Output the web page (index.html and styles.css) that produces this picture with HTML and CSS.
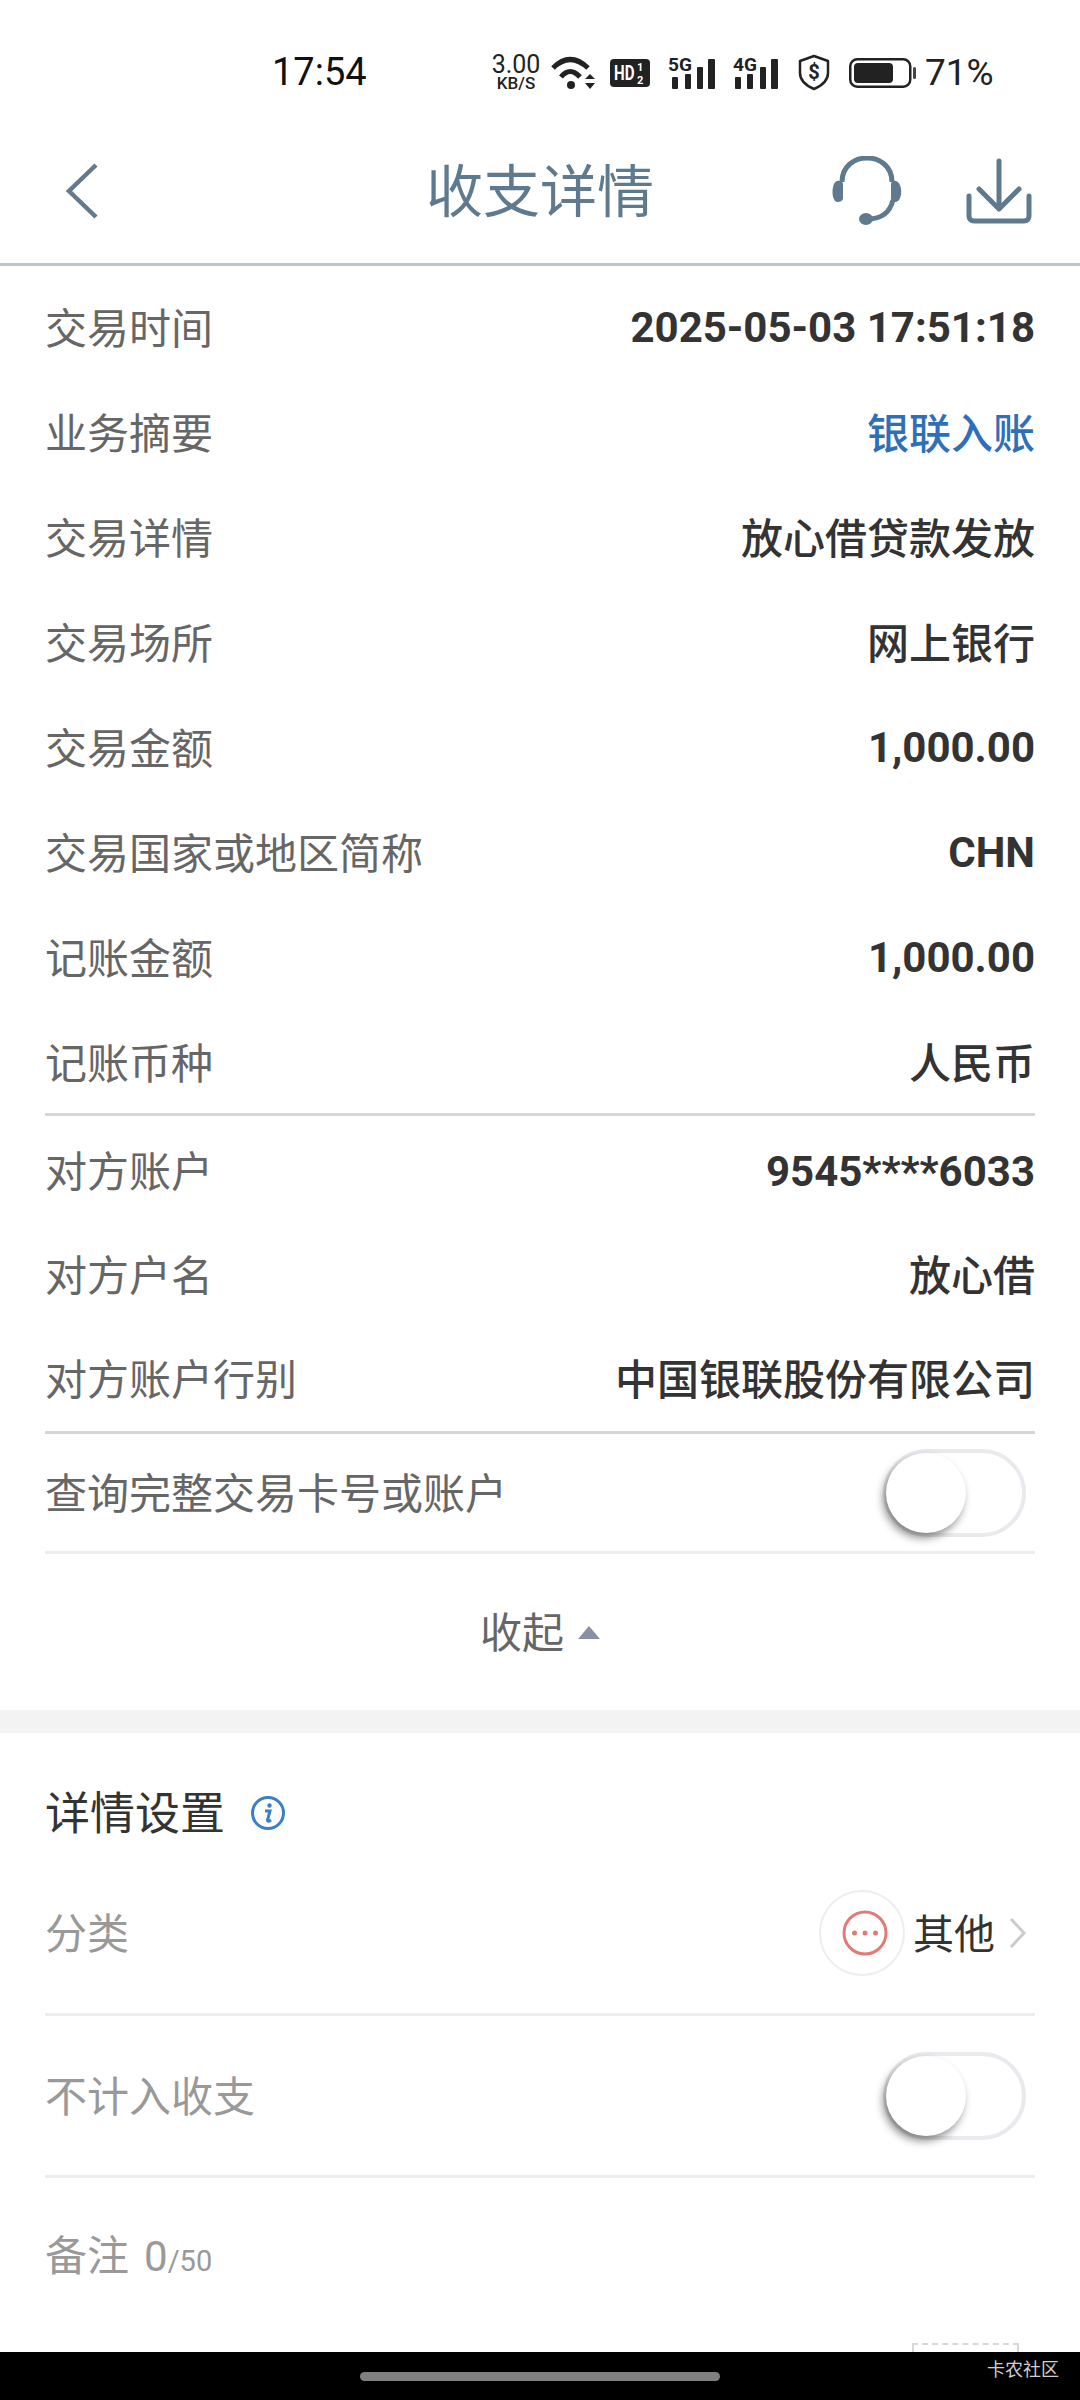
FILE: index.html
```html
<!DOCTYPE html>
<html lang="zh-CN">
<head>
    <meta charset="UTF-8">
    <meta name="viewport" content="width=device-width, initial-scale=1.0">
    <title>收支详情</title>
    <link rel="stylesheet" href="styles.css">
</head>
<body>
    <div class="status-bar">
        <span class="clock">17:54</span>
        <div class="net-speed">
            <span class="speed-num">3.00</span>
            <span class="speed-unit">KB/S</span>
        </div>
        <!-- wifi -->
        <svg class="ic-wifi" width="46" height="34" viewBox="0 0 46 34">
            <path d="M2 12 Q19 -5 37 12" fill="none" stroke="#222" stroke-width="5"/>
            <path d="M10 21 Q19 10 29 21" fill="none" stroke="#222" stroke-width="5"/>
            <circle cx="20" cy="29" r="4" fill="#222"/>
            <path d="M34 23 L39 18 L44 23 Z M34 27 H44 L39 33 Z" fill="#222"/>
        </svg>
        <!-- HD badge -->
        <svg class="ic-hd" width="40" height="28" viewBox="0 0 40 28">
            <rect width="40" height="28" rx="4" fill="#222"/>
            <text transform="translate(4 21) scale(0.72 1)" class="hd-text">HD</text>
            <text x="27" y="12" class="hd-small">1</text>
            <text x="27" y="25" class="hd-small">2</text>
        </svg>
        <!-- 5G signal -->
        <svg class="ic-signal" width="48" height="40" viewBox="0 0 48 40">
            <text x="0" y="18" class="sig-text" textLength="24" lengthAdjust="spacingAndGlyphs">5G</text>
            <rect x="4" y="24" width="6" height="12" rx="1" fill="#222"/>
            <rect x="17" y="21" width="6" height="15" rx="1" fill="#222"/>
            <rect x="29" y="14" width="6" height="22" rx="1" fill="#222"/>
            <rect x="40" y="6" width="7" height="30" rx="1" fill="#222"/>
        </svg>
        <!-- 4G signal -->
        <svg class="ic-signal ic-signal-4g" width="46" height="40" viewBox="0 0 46 40">
            <text x="0" y="18" class="sig-text" textLength="24" lengthAdjust="spacingAndGlyphs">4G</text>
            <rect x="2" y="24" width="6" height="12" rx="1" fill="#222"/>
            <rect x="14" y="21" width="6" height="15" rx="1" fill="#222"/>
            <rect x="27" y="14" width="6" height="22" rx="1" fill="#222"/>
            <rect x="38" y="6" width="7" height="30" rx="1" fill="#222"/>
        </svg>
        <!-- shield -->
        <svg class="ic-shield" width="34" height="37" viewBox="0 0 34 37">
            <path d="M17 2 L31 7 V19 C31 27 24 32 17 35 C10 32 3 27 3 19 V7 Z" fill="none" stroke="#222" stroke-width="2.500" stroke-linejoin="round"/>
            <text x="17" y="25" class="shield-text" text-anchor="middle">$</text>
        </svg>
        <!-- battery -->
        <svg class="ic-battery" width="67" height="30" viewBox="0 0 67 30">
            <rect x="1.250" y="1.250" width="60" height="27.500" rx="7" fill="none" stroke="#222" stroke-width="2.500"/>
            <rect x="5" y="5" width="39" height="20" rx="4" fill="#222"/>
            <rect x="64" y="9" width="3" height="12" rx="1.500" fill="#444"/>
        </svg>
        <span class="battery-pct">71%</span>
    </div>

    <div class="nav-bar">
        <svg class="ic-back" width="34" height="58" viewBox="0 0 34 58">
            <path d="M31 3 L4 29 L31 55" fill="none" stroke="#64798b" stroke-width="4.500"/>
        </svg>
        <h1 class="nav-title">收支详情</h1>
        <div class="nav-actions">
            <!-- headset -->
            <svg width="74" height="70" viewBox="0 0 74 70">
                <path d="M12 26 C12 -6 62 -6 62 26" fill="none" stroke="#5f7a8e" stroke-width="5"/>
                <path d="M7 25 C1 27 1 45 7 46 C10 46 13 45 13 42 V28 C13 26 10 24 7 25 Z" fill="#5f7a8e"/>
                <path d="M66 25 C73 27 73 45 66 46 C63 46 61 45 61 42 V28 C61 26 63 24 66 25 Z" fill="#5f7a8e"/>
                <path d="M63 44 C60 56 52 63 38 63" fill="none" stroke="#5f7a8e" stroke-width="5"/>
                <ellipse cx="36" cy="63" rx="7" ry="6" fill="#5f7a8e"/>
            </svg>
            <!-- download -->
            <svg width="66" height="66" viewBox="0 0 66 66">
                <path d="M33 3 V50" fill="none" stroke="#5f7a8e" stroke-width="5" stroke-linecap="round"/>
                <path d="M13 31 L33 51 L53 31" fill="none" stroke="#5f7a8e" stroke-width="5" stroke-linecap="round" stroke-linejoin="round"/>
                <path d="M3 38 V58 C3 61 5 63 8 63 H58 C61 63 63 61 63 58 V38" fill="none" stroke="#5f7a8e" stroke-width="5" stroke-linecap="round"/>
            </svg>
        </div>
    </div>

    <div class="details">
        <div class="detail-group first">
            <div class="row"><span class="label">交易时间</span><span class="value">2025-05-03 17:51:18</span></div>
            <div class="row"><span class="label">业务摘要</span><span class="value cjk link">银联入账</span></div>
            <div class="row"><span class="label">交易详情</span><span class="value cjk">放心借贷款发放</span></div>
            <div class="row"><span class="label">交易场所</span><span class="value cjk">网上银行</span></div>
            <div class="row"><span class="label">交易金额</span><span class="value">1,000.00</span></div>
            <div class="row"><span class="label">交易国家或地区简称</span><span class="value">CHN</span></div>
            <div class="row"><span class="label">记账金额</span><span class="value">1,000.00</span></div>
            <div class="row"><span class="label">记账币种</span><span class="value cjk">人民币</span></div>
        </div>
        <div class="detail-group second">
            <div class="row"><span class="label">对方账户</span><span class="value">9545****6033</span></div>
            <div class="row"><span class="label">对方户名</span><span class="value cjk">放心借</span></div>
            <div class="row"><span class="label">对方账户行别</span><span class="value cjk">中国银联股份有限公司</span></div>
        </div>
        <div class="row row-toggle">
            <span class="label">查询完整交易卡号或账户</span>
            <div class="toggle"><div class="thumb"></div></div>
        </div>
    </div>

    <div class="collapse">
        <span class="label">收起</span>
        <i class="caret-up"></i>
    </div>

    <div class="gap-band"></div>

    <div class="settings">
        <div class="settings-title">
            <h2>详情设置</h2>
            <svg width="36" height="36" viewBox="0 0 36 36">
                <circle cx="18" cy="18" r="15.500" fill="none" stroke="#3d7fc4" stroke-width="3"/>
                <circle cx="19.500" cy="10.500" r="2.200" fill="#3d7fc4"/>
                <path d="M15 16 H20 L17.500 25 C17.200 26.500 18.500 26.800 21 25" fill="none" stroke="#3d7fc4" stroke-width="3"/>
            </svg>
        </div>
        <div class="set-row set-category">
            <span class="set-label">分类</span>
            <div class="category">
                <div class="cat-icon">
                    <svg width="46" height="46" viewBox="0 0 46 46">
                        <circle cx="23" cy="23" r="21" fill="none" stroke="#e27a78" stroke-width="3"/>
                        <circle cx="12.500" cy="23" r="2.500" fill="#e27a78"/>
                        <circle cx="23" cy="23" r="2.500" fill="#e27a78"/>
                        <circle cx="33.500" cy="23" r="2.500" fill="#e27a78"/>
                    </svg>
                </div>
                <span class="cat-name">其他</span>
                <svg width="18" height="32" viewBox="0 0 18 32">
                    <path d="M2 2 L15 16 L2 30" fill="none" stroke="#cccccc" stroke-width="3"/>
                </svg>
            </div>
        </div>
        <div class="set-row set-exclude">
            <span class="set-label">不计入收支</span>
            <div class="toggle"><div class="thumb"></div></div>
        </div>
        <div class="note">
            <span class="set-label">备注</span>
            <span class="note-count">0</span><span class="note-max">/50</span>
            <div class="dashed-btn"></div>
        </div>
    </div>

    <div class="bottom-bar">
        <div class="home-handle"></div>
        <span class="watermark">卡农社区</span>
    </div>
</body>
</html>
```

FILE: styles.css
```css
body {
    font-family: Roboto, "Noto Sans CJK SC", sans-serif;
    background-color: #ffffff;
    margin: 0;
    padding: 0;
    width: 1080px;
    height: 2400px;
    overflow: hidden;
    display: flex;
    flex-direction: column;
}

/* status bar */
.status-bar {
    height: 55px;
    padding-top: 45px;
    padding-left: 272px;
    display: flex;
    align-items: center;
    color: #111;
}

.clock {
    font-size: 38px;
    width: 94px;
    line-height: 55px;
    white-space: nowrap;
}

.net-speed {
    margin-left: 124px;
    width: 52px;
    display: flex;
    flex-direction: column;
    align-items: center;
    color: #222;
}

.speed-num {
    font-size: 25px;
    line-height: 22px;
}

.speed-unit {
    font-size: 17px;
    font-weight: 500;
    line-height: 15px;
}

.ic-wifi {
    margin-left: 9px;
}

.ic-hd {
    margin-left: 13px;
}

.hd-text {
    font-size: 21px;
    font-weight: 700;
    fill: #fff;
}

.hd-small {
    font-size: 11px;
    font-weight: 700;
    fill: #fff;
}

.ic-signal {
    margin-left: 18px;
}

.ic-signal-4g {
    margin-left: 17px;
}

.sig-text {
    font-size: 19px;
    font-weight: 700;
    fill: #222;
}

.ic-shield {
    margin-left: 18px;
}

.shield-text {
    font-size: 20px;
    font-weight: 700;
    fill: #222;
}

.ic-battery {
    margin-left: 18px;
}

.battery-pct {
    margin-left: 9px;
    font-size: 37px;
    line-height: 55px;
    color: #222;
}

/* top nav */
.nav-bar {
    height: 145px;
    padding-top: 18px;
    border-bottom: 3px solid #b7c7d2;
    display: grid;
    grid-template-columns: 1fr auto 1fr;
    align-items: center;
}

.ic-back {
    margin-left: 65px;
}

.nav-title {
    margin: 5px 0 0;
    font-size: 57px;
    font-weight: 400;
    line-height: 70px;
    color: #5f7a8e;
}

.nav-actions {
    display: flex;
    justify-content: flex-end;
    align-items: center;
    gap: 62px;
    padding-right: 48px;
}

/* detail rows */
.details {
    margin: 9px 45px 0;
}

.row {
    height: 105px;
    display: flex;
    justify-content: space-between;
    align-items: center;
    font-size: 42px;
}

.label {
    color: #666666;
    padding-bottom: 5px;
}

.value {
    color: #333333;
    font-weight: 700;
}

/* chinese glyphs sit a bit low and look heavier than the reference at 700 */
.value.cjk {
    font-weight: 500;
    padding-bottom: 5px;
}

.value.link {
    color: #2f6fb9;
}

.detail-group {
    border-bottom: 3px solid #d6d6d6;
}

.detail-group.first {
    height: 838px;
}

.detail-group.second {
    padding-top: 3px;
}

.detail-group.second .row {
    height: 104px;
}

.row-toggle {
    height: 117px;
    border-bottom: 3px solid #eeeeee;
}

.toggle {
    width: 143px;
    height: 88px;
    box-sizing: border-box;
    border: 4px solid #e9e9ee;
    border-radius: 44px;
    margin-right: 9px;
    position: relative;
}

.thumb {
    position: absolute;
    left: -1px;
    top: 0;
    width: 80px;
    height: 80px;
    border-radius: 50%;
    background-color: #ffffff;
    box-shadow: -3px 5px 8px rgba(0, 0, 0, 0.45);
}

/* collapse link */
.collapse {
    height: 156px;
    display: flex;
    justify-content: center;
    align-items: center;
    gap: 14px;
    font-size: 42px;
}

.caret-up {
    width: 0;
    height: 0;
    border-left: 11px solid transparent;
    border-right: 11px solid transparent;
    border-bottom: 13px solid #8a8fa5;
}

.gap-band {
    height: 23px;
    background-color: #f3f3f3;
}

/* settings */
.settings {
    flex: 1;
    margin: 0 45px;
    display: flex;
    flex-direction: column;
}

.settings-title {
    height: 80px;
    margin-top: 40px;
    display: flex;
    align-items: center;
    gap: 25px;
}

.settings-title h2 {
    margin: 0;
    font-size: 45px;
    font-weight: 400;
    color: #333333;
    padding-bottom: 5px;
}

.set-row {
    display: flex;
    justify-content: space-between;
    align-items: center;
    border-bottom: 3px solid #eeeeee;
}

.set-category {
    height: 160px;
}

.set-exclude {
    height: 159px;
}

.set-label {
    font-size: 42px;
    color: #999999;
    padding-bottom: 5px;
}

.category {
    display: flex;
    align-items: center;
}

.cat-icon {
    width: 86px;
    height: 86px;
    box-sizing: border-box;
    border: 2px solid #eeeeee;
    border-radius: 50%;
    display: flex;
    justify-content: center;
    align-items: center;
}

.cat-name {
    margin-left: 8px;
    font-size: 41px;
    color: #333333;
    padding-bottom: 5px;
}

.category svg:last-child {
    margin-left: 14px;
    margin-right: 8px;
}

.note {
    flex: 1;
    position: relative;
    display: flex;
    align-items: baseline;
    padding-top: 44px;
    color: #999999;
}

.note-count {
    margin-left: 15px;
    font-size: 42px;
}

.note-max {
    font-size: 29px;
}

.dashed-btn {
    position: absolute;
    left: 867px;
    bottom: 0;
    width: 107px;
    height: 9px;
    box-sizing: border-box;
    border: 2px dashed #d8d8d8;
    border-bottom: none;
}

/* bottom strip */
.bottom-bar {
    height: 48px;
    background-color: #000000;
    position: relative;
    display: flex;
    justify-content: center;
    align-items: center;
}

.home-handle {
    width: 360px;
    height: 9px;
    border-radius: 5px;
    background-color: #808080;
}

.watermark {
    position: absolute;
    left: 987px;
    top: 6px;
    font-size: 18px;
    line-height: 24px;
    color: #cfcfcf;
}
```
